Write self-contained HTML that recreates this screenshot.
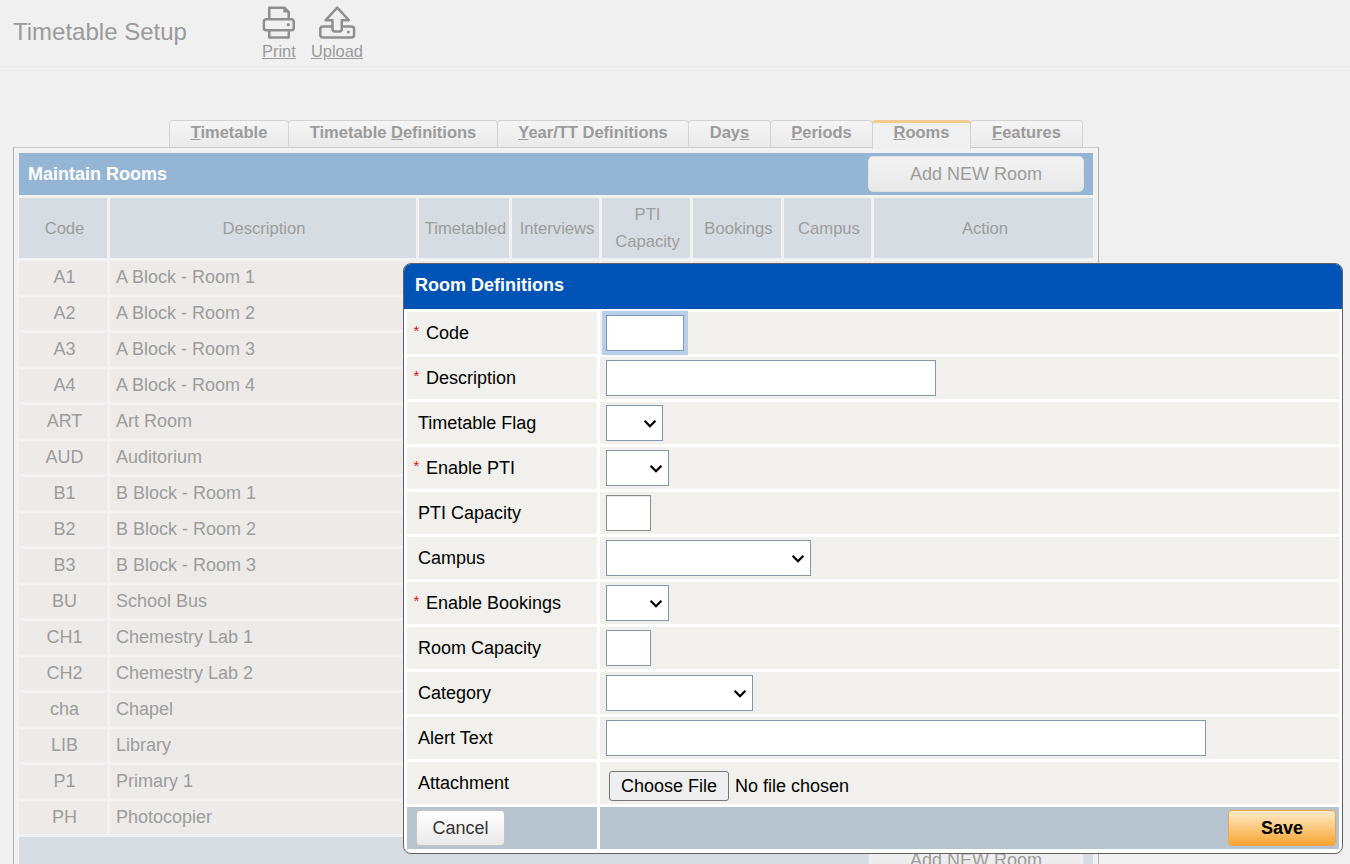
<!DOCTYPE html>
<html><head><meta charset="utf-8">
<style>
*{box-sizing:border-box;margin:0;padding:0}
html,body{width:1350px;height:864px;overflow:hidden;background:#f0f0f0;font-family:"Liberation Sans",sans-serif;position:relative}
.abs{position:absolute}
#title{left:13px;top:18px;font-size:24px;line-height:28px;color:#9a9a9a;white-space:nowrap}
#hdrline{left:0;top:70px;width:1350px;height:1px;background:#e6e6e6}
#hdrline2{left:0;top:66px;width:1350px;height:1px;background:#ebebeb}
.lnk{font-size:16.4px;line-height:18px;color:#9a9a9a;text-decoration:underline;white-space:nowrap}
/* tabs */
.tab{position:absolute;top:120px;height:28px;border:1px solid #d2d2d2;border-bottom:none;border-radius:4px 4px 0 0;background:linear-gradient(#f5f5f5,#e9e9e9);font-size:16.5px;font-weight:bold;color:#9b9b9b;text-align:center;line-height:22px;white-space:nowrap}
.tab u{text-decoration:underline}
.tab.act{height:29px;border-top:3px solid #f2cb8e;background:#f0f0f0;line-height:18px;z-index:2}
#panel{left:13px;top:147px;width:1086px;height:730px;border:1px solid #adadad;border-top-color:#c9c9c9;background:#f2f2f2}
#bluebar{left:19px;top:153px;width:1074px;height:42px;background:#95b5d5}
#mr{left:28px;top:163px;font-size:18px;font-weight:bold;color:#fff;line-height:22px;white-space:nowrap}
.btn1{position:absolute;left:868px;width:216px;height:36px;border-radius:5px;background:linear-gradient(#f3f3f3,#e8e8e8);border:1px solid #e2e2e2;font-size:18px;color:#9c9c9c;text-align:center;line-height:34px}
.hc{position:absolute;top:198px;height:60px;background:#d6dce1;color:#9c9c9c;font-size:16.6px;padding-left:3px;text-align:center;display:flex;align-items:center;justify-content:center;line-height:27px}
.rc{position:absolute;height:33px;background:#ecebe9;color:#9c9c9c;font-size:18px;line-height:33px;white-space:nowrap}
.code{left:19px;width:88px;text-align:center;padding-left:3px}
.desc{left:110px;width:306px;padding-left:6px}
/* modal */
#modal{left:403px;top:263px;width:940px;height:591px;border:1px solid #626262;border-radius:8px;background:#fff;overflow:hidden;z-index:10}
#mhead{left:0;top:0;width:938px;height:45px;background:#0153b5}
#mtitle{left:11px;top:10px;font-size:18px;font-weight:bold;color:#fff;line-height:22px;white-space:nowrap}
.lc{position:absolute;left:3px;width:190px;height:42px;background:#f1f0ec;font-size:18px;color:#000;line-height:42px;white-space:nowrap}
.ic{position:absolute;left:196px;width:739px;height:42px;background:#f1f0ec}
.req{color:#e01010;font-size:15px;position:absolute;left:6.5px;top:-2.5px}
.inp{position:absolute;background:#fff;border:1px solid #8097ae}
.chev{position:absolute}
</style></head>
<body>
<div id="title" class="abs">Timetable Setup</div>
<div id="hdrline2" class="abs"></div>
<div id="hdrline" class="abs"></div>
<svg class="abs" style="left:0;top:0" width="400" height="70" viewBox="0 0 400 70">
 <g fill="none" stroke="#8f8f8f" stroke-width="2.5" stroke-linejoin="round">
  <path d="M269.25 19.25 V7.65 H284.3 L288.75 12.1 V19.25"/>
  <rect x="263.85" y="19.25" width="29.9" height="11.1" rx="2.6"/>
  <path d="M269.25 30.35 V37.55 H288.75 V30.35"/>
  <path d="M332.5 20.2 H325.7 L337.2 7.6 L348.8 20.2 H341.75 V28.9 Q341.75 31.4 339.25 31.4 H335 Q332.5 31.4 332.5 28.9 Z"/>
  <path d="M332.5 26.4 H323.1 Q320.3 26.4 320.3 29.2 V34.7 Q320.3 37.5 323.1 37.5 H351.3 Q354.1 37.5 354.1 34.7 V29.2 Q354.1 26.4 351.3 26.4 H341.75"/>
 </g>
 <path d="M283.3 7.65 L288.75 12.1 V12.5 H283.3 Z" fill="#8f8f8f"/>
 <circle cx="288.3" cy="24.7" r="1.6" fill="#8f8f8f"/>
 <circle cx="348.3" cy="31.9" r="1.5" fill="#8f8f8f"/>
</svg>
<div class="abs lnk" style="left:262px;top:42px">Print</div>
<div class="abs lnk" style="left:311px;top:42px">Upload</div>

<div class="tab" style="left:169px;width:120px"><u>T</u>imetable</div>
<div class="tab" style="left:288px;width:210px">Timetable <u>D</u>efinitions</div>
<div class="tab" style="left:497px;width:192px"><u>Y</u>ear/TT Definitions</div>
<div class="tab" style="left:688px;width:83px">Day<u>s</u></div>
<div class="tab" style="left:770px;width:103px"><u>P</u>eriods</div>
<div class="tab act" style="left:872px;width:99px"><u>R</u>ooms</div>
<div class="tab" style="left:970px;width:113px"><u>F</u>eatures</div>

<div id="panel" class="abs"></div>
<div id="bluebar" class="abs"></div>
<div id="mr" class="abs">Maintain Rooms</div>
<div class="btn1" style="top:156px">Add NEW Room</div>

<div class="hc" style="left:19px;width:88px">Code</div>
<div class="hc" style="left:110px;width:306px;padding-left:2px">Description</div>
<div class="hc" style="left:419px;width:90px">Timetabled</div>
<div class="hc" style="left:512px;width:87px">Interviews</div>
<div class="hc" style="left:602px;width:88px">PTI<br>Capacity</div>
<div class="hc" style="left:693px;width:88px">Bookings</div>
<div class="hc" style="left:784px;width:87px">Campus</div>
<div class="hc" style="left:874px;width:219px">Action</div>

<div id="rows">
<div class="rc code" style="top:261px">A1</div>
<div class="rc desc" style="top:261px">A Block - Room 1</div>
<div class="rc" style="top:261px;left:419px;width:90px"></div>
<div class="rc" style="top:261px;left:512px;width:87px"></div>
<div class="rc" style="top:261px;left:602px;width:88px"></div>
<div class="rc" style="top:261px;left:693px;width:88px"></div>
<div class="rc" style="top:261px;left:784px;width:87px"></div>
<div class="rc" style="top:261px;left:874px;width:219px"></div>
<div class="rc code" style="top:297px">A2</div>
<div class="rc desc" style="top:297px">A Block - Room 2</div>
<div class="rc" style="top:297px;left:419px;width:90px"></div>
<div class="rc" style="top:297px;left:512px;width:87px"></div>
<div class="rc" style="top:297px;left:602px;width:88px"></div>
<div class="rc" style="top:297px;left:693px;width:88px"></div>
<div class="rc" style="top:297px;left:784px;width:87px"></div>
<div class="rc" style="top:297px;left:874px;width:219px"></div>
<div class="rc code" style="top:333px">A3</div>
<div class="rc desc" style="top:333px">A Block - Room 3</div>
<div class="rc" style="top:333px;left:419px;width:90px"></div>
<div class="rc" style="top:333px;left:512px;width:87px"></div>
<div class="rc" style="top:333px;left:602px;width:88px"></div>
<div class="rc" style="top:333px;left:693px;width:88px"></div>
<div class="rc" style="top:333px;left:784px;width:87px"></div>
<div class="rc" style="top:333px;left:874px;width:219px"></div>
<div class="rc code" style="top:369px">A4</div>
<div class="rc desc" style="top:369px">A Block - Room 4</div>
<div class="rc" style="top:369px;left:419px;width:90px"></div>
<div class="rc" style="top:369px;left:512px;width:87px"></div>
<div class="rc" style="top:369px;left:602px;width:88px"></div>
<div class="rc" style="top:369px;left:693px;width:88px"></div>
<div class="rc" style="top:369px;left:784px;width:87px"></div>
<div class="rc" style="top:369px;left:874px;width:219px"></div>
<div class="rc code" style="top:405px">ART</div>
<div class="rc desc" style="top:405px">Art Room</div>
<div class="rc" style="top:405px;left:419px;width:90px"></div>
<div class="rc" style="top:405px;left:512px;width:87px"></div>
<div class="rc" style="top:405px;left:602px;width:88px"></div>
<div class="rc" style="top:405px;left:693px;width:88px"></div>
<div class="rc" style="top:405px;left:784px;width:87px"></div>
<div class="rc" style="top:405px;left:874px;width:219px"></div>
<div class="rc code" style="top:441px">AUD</div>
<div class="rc desc" style="top:441px">Auditorium</div>
<div class="rc" style="top:441px;left:419px;width:90px"></div>
<div class="rc" style="top:441px;left:512px;width:87px"></div>
<div class="rc" style="top:441px;left:602px;width:88px"></div>
<div class="rc" style="top:441px;left:693px;width:88px"></div>
<div class="rc" style="top:441px;left:784px;width:87px"></div>
<div class="rc" style="top:441px;left:874px;width:219px"></div>
<div class="rc code" style="top:477px">B1</div>
<div class="rc desc" style="top:477px">B Block - Room 1</div>
<div class="rc" style="top:477px;left:419px;width:90px"></div>
<div class="rc" style="top:477px;left:512px;width:87px"></div>
<div class="rc" style="top:477px;left:602px;width:88px"></div>
<div class="rc" style="top:477px;left:693px;width:88px"></div>
<div class="rc" style="top:477px;left:784px;width:87px"></div>
<div class="rc" style="top:477px;left:874px;width:219px"></div>
<div class="rc code" style="top:513px">B2</div>
<div class="rc desc" style="top:513px">B Block - Room 2</div>
<div class="rc" style="top:513px;left:419px;width:90px"></div>
<div class="rc" style="top:513px;left:512px;width:87px"></div>
<div class="rc" style="top:513px;left:602px;width:88px"></div>
<div class="rc" style="top:513px;left:693px;width:88px"></div>
<div class="rc" style="top:513px;left:784px;width:87px"></div>
<div class="rc" style="top:513px;left:874px;width:219px"></div>
<div class="rc code" style="top:549px">B3</div>
<div class="rc desc" style="top:549px">B Block - Room 3</div>
<div class="rc" style="top:549px;left:419px;width:90px"></div>
<div class="rc" style="top:549px;left:512px;width:87px"></div>
<div class="rc" style="top:549px;left:602px;width:88px"></div>
<div class="rc" style="top:549px;left:693px;width:88px"></div>
<div class="rc" style="top:549px;left:784px;width:87px"></div>
<div class="rc" style="top:549px;left:874px;width:219px"></div>
<div class="rc code" style="top:585px">BU</div>
<div class="rc desc" style="top:585px">School Bus</div>
<div class="rc" style="top:585px;left:419px;width:90px"></div>
<div class="rc" style="top:585px;left:512px;width:87px"></div>
<div class="rc" style="top:585px;left:602px;width:88px"></div>
<div class="rc" style="top:585px;left:693px;width:88px"></div>
<div class="rc" style="top:585px;left:784px;width:87px"></div>
<div class="rc" style="top:585px;left:874px;width:219px"></div>
<div class="rc code" style="top:621px">CH1</div>
<div class="rc desc" style="top:621px">Chemestry Lab 1</div>
<div class="rc" style="top:621px;left:419px;width:90px"></div>
<div class="rc" style="top:621px;left:512px;width:87px"></div>
<div class="rc" style="top:621px;left:602px;width:88px"></div>
<div class="rc" style="top:621px;left:693px;width:88px"></div>
<div class="rc" style="top:621px;left:784px;width:87px"></div>
<div class="rc" style="top:621px;left:874px;width:219px"></div>
<div class="rc code" style="top:657px">CH2</div>
<div class="rc desc" style="top:657px">Chemestry Lab 2</div>
<div class="rc" style="top:657px;left:419px;width:90px"></div>
<div class="rc" style="top:657px;left:512px;width:87px"></div>
<div class="rc" style="top:657px;left:602px;width:88px"></div>
<div class="rc" style="top:657px;left:693px;width:88px"></div>
<div class="rc" style="top:657px;left:784px;width:87px"></div>
<div class="rc" style="top:657px;left:874px;width:219px"></div>
<div class="rc code" style="top:693px">cha</div>
<div class="rc desc" style="top:693px">Chapel</div>
<div class="rc" style="top:693px;left:419px;width:90px"></div>
<div class="rc" style="top:693px;left:512px;width:87px"></div>
<div class="rc" style="top:693px;left:602px;width:88px"></div>
<div class="rc" style="top:693px;left:693px;width:88px"></div>
<div class="rc" style="top:693px;left:784px;width:87px"></div>
<div class="rc" style="top:693px;left:874px;width:219px"></div>
<div class="rc code" style="top:729px">LIB</div>
<div class="rc desc" style="top:729px">Library</div>
<div class="rc" style="top:729px;left:419px;width:90px"></div>
<div class="rc" style="top:729px;left:512px;width:87px"></div>
<div class="rc" style="top:729px;left:602px;width:88px"></div>
<div class="rc" style="top:729px;left:693px;width:88px"></div>
<div class="rc" style="top:729px;left:784px;width:87px"></div>
<div class="rc" style="top:729px;left:874px;width:219px"></div>
<div class="rc code" style="top:765px">P1</div>
<div class="rc desc" style="top:765px">Primary 1</div>
<div class="rc" style="top:765px;left:419px;width:90px"></div>
<div class="rc" style="top:765px;left:512px;width:87px"></div>
<div class="rc" style="top:765px;left:602px;width:88px"></div>
<div class="rc" style="top:765px;left:693px;width:88px"></div>
<div class="rc" style="top:765px;left:784px;width:87px"></div>
<div class="rc" style="top:765px;left:874px;width:219px"></div>
<div class="rc code" style="top:801px">PH</div>
<div class="rc desc" style="top:801px">Photocopier</div>
<div class="rc" style="top:801px;left:419px;width:90px"></div>
<div class="rc" style="top:801px;left:512px;width:87px"></div>
<div class="rc" style="top:801px;left:602px;width:88px"></div>
<div class="rc" style="top:801px;left:693px;width:88px"></div>
<div class="rc" style="top:801px;left:784px;width:87px"></div>
<div class="rc" style="top:801px;left:874px;width:219px"></div>
</div><!--/rows-->

<div class="abs" style="left:19px;top:837px;width:1074px;height:40px;background:#d6dce1"></div>
<div class="btn1" style="top:842px">Add NEW Room</div>

<div id="modal" class="abs">
 <div id="mhead" class="abs"></div>
 <div id="mtitle" class="abs">Room Definitions</div>
 <div id="form">
<div class="lc" style="top:48px"><span class="req">*</span><span style="position:absolute;left:19px">Code</span></div>
<div class="ic" style="top:48px"></div>
<div class="abs" style="left:198px;top:47px;width:86px;height:44px;background:#b7cfea"></div>
<div class="inp" style="left:202px;top:51px;width:78px;height:36px"></div>
<div class="lc" style="top:93px"><span class="req">*</span><span style="position:absolute;left:19px">Description</span></div>
<div class="ic" style="top:93px"></div>
<div class="inp" style="left:202px;top:96px;width:330px;height:36px"></div>
<div class="lc" style="top:138px"><span style="position:absolute;left:11px">Timetable Flag</span></div>
<div class="ic" style="top:138px"></div>
<div class="inp" style="left:202px;top:141px;width:57px;height:36px"></div>
<svg class="chev" style="left:239px;top:155px" width="14" height="10" viewBox="0 0 14 10"><path d="M1.6 1.8 L7 7.2 L12.4 1.8" fill="none" stroke="#000" stroke-width="2.3"/></svg>
<div class="lc" style="top:183px"><span class="req">*</span><span style="position:absolute;left:19px">Enable PTI</span></div>
<div class="ic" style="top:183px"></div>
<div class="inp" style="left:202px;top:186px;width:63px;height:36px"></div>
<svg class="chev" style="left:245px;top:200px" width="14" height="10" viewBox="0 0 14 10"><path d="M1.6 1.8 L7 7.2 L12.4 1.8" fill="none" stroke="#000" stroke-width="2.3"/></svg>
<div class="lc" style="top:228px"><span style="position:absolute;left:11px">PTI Capacity</span></div>
<div class="ic" style="top:228px"></div>
<div class="inp" style="left:202px;top:231px;width:45px;height:36px;border-color:#8c8c8c;box-shadow:inset 0 1px 1px #e8e8e8"></div>
<div class="lc" style="top:273px"><span style="position:absolute;left:11px">Campus</span></div>
<div class="ic" style="top:273px"></div>
<div class="inp" style="left:202px;top:276px;width:205px;height:36px"></div>
<svg class="chev" style="left:387px;top:290px" width="14" height="10" viewBox="0 0 14 10"><path d="M1.6 1.8 L7 7.2 L12.4 1.8" fill="none" stroke="#000" stroke-width="2.3"/></svg>
<div class="lc" style="top:318px"><span class="req">*</span><span style="position:absolute;left:19px">Enable Bookings</span></div>
<div class="ic" style="top:318px"></div>
<div class="inp" style="left:202px;top:321px;width:63px;height:36px"></div>
<svg class="chev" style="left:245px;top:335px" width="14" height="10" viewBox="0 0 14 10"><path d="M1.6 1.8 L7 7.2 L12.4 1.8" fill="none" stroke="#000" stroke-width="2.3"/></svg>
<div class="lc" style="top:363px"><span style="position:absolute;left:11px">Room Capacity</span></div>
<div class="ic" style="top:363px"></div>
<div class="inp" style="left:202px;top:366px;width:45px;height:36px"></div>
<div class="lc" style="top:408px"><span style="position:absolute;left:11px">Category</span></div>
<div class="ic" style="top:408px"></div>
<div class="inp" style="left:202px;top:411px;width:147px;height:36px"></div>
<svg class="chev" style="left:329px;top:425px" width="14" height="10" viewBox="0 0 14 10"><path d="M1.6 1.8 L7 7.2 L12.4 1.8" fill="none" stroke="#000" stroke-width="2.3"/></svg>
<div class="lc" style="top:453px"><span style="position:absolute;left:11px">Alert Text</span></div>
<div class="ic" style="top:453px"></div>
<div class="inp" style="left:202px;top:456px;width:600px;height:36px"></div>
<div class="lc" style="top:498px"><span style="position:absolute;left:11px">Attachment</span></div>
<div class="ic" style="top:498px"></div>
<div class="abs" style="left:205px;top:507px;width:120px;height:30px;border:1px solid #767676;border-radius:3px;background:#efefef;font-size:18px;line-height:28px;text-align:center;color:#000">Choose File</div>
<div class="abs" style="left:331px;top:507px;font-size:18px;line-height:31px;color:#000;white-space:nowrap">No file chosen</div>
<div class="abs" style="left:3px;top:543px;width:190px;height:42px;background:#b7c4cf"></div>
<div class="abs" style="left:196px;top:543px;width:739px;height:42px;background:#b7c4cf"></div>
<div class="abs" style="left:12px;top:546px;width:89px;height:36px;border:1px solid #c4c4c4;border-radius:4px;background:linear-gradient(#ffffff,#e9e9e9);font-size:18px;line-height:34px;text-align:center;color:#333">Cancel</div>
<div class="abs" style="left:824px;top:546px;width:108px;height:36px;border:1px solid #eaa64c;border-radius:4px;background:linear-gradient(#feebc8,#f7a532);font-size:18px;font-weight:bold;line-height:35px;text-align:center;color:#000">Save</div>
</div><!--/form-->
</div>
</body></html>
